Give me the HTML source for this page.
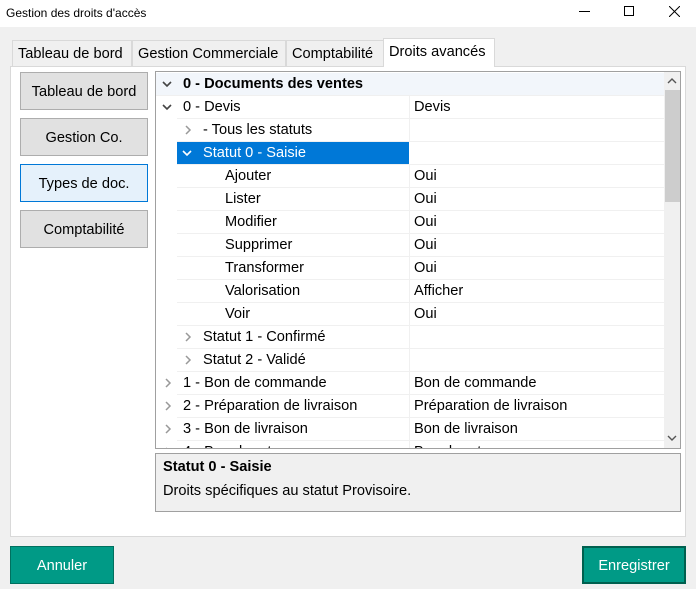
<!DOCTYPE html>
<html><head><meta charset="utf-8"><style>
*{margin:0;padding:0;box-sizing:border-box}
body{width:696px;height:589px;background:#f0f0f0;font-family:"Liberation Sans",sans-serif;font-size:14.6px;color:#000;position:relative;overflow:hidden}
.a{position:absolute}
.title{left:0;top:0;width:696px;height:27px;background:#fff;font-size:12px}
.tab{top:40px;height:27px;border:1px solid #d9d9d9;border-bottom:none;background:#f0f0f0;padding:5px 0 0 5px}
.panel{left:10px;top:66px;width:676px;height:471px;background:#fff;border:1px solid #d9d9d9}
.btn{left:20px;width:128px;height:38px;background:#e1e1e1;border:1px solid #adadad;text-align:center;line-height:39px}
.tree{left:155px;top:71px;width:526px;height:378px;border:1px solid #a0a0a0;background:#fff;overflow:hidden}
.row{position:absolute;left:0;width:509px;height:23px;border-bottom:1px solid #f0f0f0;line-height:23px}
.row span{position:absolute}
.sep{position:absolute;left:253px;top:0;width:1px;height:23px;background:#f0f0f0}
.ch{position:absolute;top:6px}
.gb{left:10px;width:104px;height:38px;background:#009a86;border:1px solid #00705f;color:#fff;text-align:center;line-height:38px}
</style></head><body>
<div class="a title"><span class="a" style="left:6px;top:6px">Gestion des droits d'accès</span>
<div class="a" style="left:579px;top:11px;width:11px;height:1px;background:#000"></div>
<div class="a" style="left:624px;top:6px;width:10px;height:10px;border:1px solid #000"></div>
<svg class="a" style="left:669px;top:6px" width="11" height="11"><path d="M0 0L11 11M11 0L0 11" stroke="#000"/></svg>
</div>
<div class="a tab" style="left:12px;width:120px">Tableau de bord</div>
<div class="a tab" style="left:132px;width:154px">Gestion Commerciale</div>
<div class="a tab" style="left:286px;width:98px">Comptabilité</div>
<div class="a panel"></div>
<div class="a tab" style="left:383px;top:38px;height:29px;width:112px;background:#fff">Droits avancés</div>
<div class="a btn" style="top:72px">Tableau de bord</div>
<div class="a btn" style="top:118px">Gestion Co.</div>
<div class="a btn" style="top:164px;background:#e5f1fb;border-color:#0078d7">Types de doc.</div>
<div class="a btn" style="top:210px">Comptabilité</div>
<div class="a tree">
<div class="row" style="top:1px;background:#f2f6fb;font-weight:bold"><svg class="ch" style="left:6px" width="10" height="10"><path d="M1 3L5 7L9 3" stroke="#444" stroke-width="1.6" fill="none"/></svg><span style="left:27px">0 - Documents des ventes</span></div>
<div class="row" style="top:24px;left:21px;width:488px"><svg class="ch" style="left:-15px" width="10" height="10"><path d="M1 3L5 7L9 3" stroke="#444" stroke-width="1.6" fill="none"/></svg><span style="left:6px">0 - Devis</span><div class="sep" style="left:232px"></div><span style="left:237px">Devis</span></div>
<div class="row" style="top:47px;left:21px;width:488px"><svg class="ch" style="left:6px" width="10" height="10"><path d="M3 1L7 5L3 9" stroke="#999" stroke-width="1.5" fill="none"/></svg><span style="left:26px">- Tous les statuts</span><div class="sep" style="left:232px"></div></div>
<div class="row" style="top:70px;left:21px;width:488px"><div style="position:absolute;left:0;top:0;width:232px;height:22px;background:#0078d7"></div><svg class="ch" style="left:5px" width="10" height="10"><path d="M1 3L5 7L9 3" stroke="#fff" stroke-width="1.6" fill="none"/></svg><span style="left:26px;color:#fff">Statut 0 - Saisie</span></div>
<div class="row" style="top:93px;left:21px;width:488px"><span style="left:48px">Ajouter</span><div class="sep" style="left:232px"></div><span style="left:237px">Oui</span></div>
<div class="row" style="top:116px;left:21px;width:488px"><span style="left:48px">Lister</span><div class="sep" style="left:232px"></div><span style="left:237px">Oui</span></div>
<div class="row" style="top:139px;left:21px;width:488px"><span style="left:48px">Modifier</span><div class="sep" style="left:232px"></div><span style="left:237px">Oui</span></div>
<div class="row" style="top:162px;left:21px;width:488px"><span style="left:48px">Supprimer</span><div class="sep" style="left:232px"></div><span style="left:237px">Oui</span></div>
<div class="row" style="top:185px;left:21px;width:488px"><span style="left:48px">Transformer</span><div class="sep" style="left:232px"></div><span style="left:237px">Oui</span></div>
<div class="row" style="top:208px;left:21px;width:488px"><span style="left:48px">Valorisation</span><div class="sep" style="left:232px"></div><span style="left:237px">Afficher</span></div>
<div class="row" style="top:231px;left:21px;width:488px"><span style="left:48px">Voir</span><div class="sep" style="left:232px"></div><span style="left:237px">Oui</span></div>
<div class="row" style="top:254px;left:21px;width:488px"><svg class="ch" style="left:6px" width="10" height="10"><path d="M3 1L7 5L3 9" stroke="#999" stroke-width="1.5" fill="none"/></svg><span style="left:26px">Statut 1 - Confirmé</span><div class="sep" style="left:232px"></div></div>
<div class="row" style="top:277px;left:21px;width:488px"><svg class="ch" style="left:6px" width="10" height="10"><path d="M3 1L7 5L3 9" stroke="#999" stroke-width="1.5" fill="none"/></svg><span style="left:26px">Statut 2 - Validé</span><div class="sep" style="left:232px"></div></div>
<div class="row" style="top:300px;left:21px;width:488px"><svg class="ch" style="left:-14px" width="10" height="10"><path d="M3 1L7 5L3 9" stroke="#999" stroke-width="1.5" fill="none"/></svg><span style="left:6px">1 - Bon de commande</span><div class="sep" style="left:232px"></div><span style="left:237px">Bon de commande</span></div>
<div class="row" style="top:323px;left:21px;width:488px"><svg class="ch" style="left:-14px" width="10" height="10"><path d="M3 1L7 5L3 9" stroke="#999" stroke-width="1.5" fill="none"/></svg><span style="left:6px">2 - Préparation de livraison</span><div class="sep" style="left:232px"></div><span style="left:237px">Préparation de livraison</span></div>
<div class="row" style="top:346px;left:21px;width:488px"><svg class="ch" style="left:-14px" width="10" height="10"><path d="M3 1L7 5L3 9" stroke="#999" stroke-width="1.5" fill="none"/></svg><span style="left:6px">3 - Bon de livraison</span><div class="sep" style="left:232px"></div><span style="left:237px">Bon de livraison</span></div>
<div class="row" style="top:369px;left:21px;width:488px"><svg class="ch" style="left:-14px" width="10" height="10"><path d="M3 1L7 5L3 9" stroke="#999" stroke-width="1.5" fill="none"/></svg><span style="left:6px">4 - Bon de retour</span><div class="sep" style="left:232px"></div><span style="left:237px">Bon de retour</span></div>
<div class="a" style="left:508px;top:0;width:17px;height:376px;background:#f0f0f0"></div>
<div class="a" style="left:509px;top:18px;width:15px;height:112px;background:#cdcdcd"></div>
<svg class="a" style="left:511px;top:5px" width="10" height="8"><path d="M1 6L5 2L9 6" stroke="#555" stroke-width="1.4" fill="none"/></svg>
<svg class="a" style="left:511px;top:362px" width="10" height="8"><path d="M1 2L5 6L9 2" stroke="#555" stroke-width="1.4" fill="none"/></svg>
</div>
<div class="a" style="left:155px;top:453px;width:526px;height:59px;border:1px solid #a0a0a0;background:#f0f0f0">
<div class="a" style="left:7px;top:5px;font-weight:bold">Statut 0 - Saisie</div>
<div class="a" style="left:7px;top:29px">Droits spécifiques au statut Provisoire.</div>
</div>
<div class="a gb" style="top:546px">Annuler</div>
<div class="a gb" style="left:582px;top:546px;border:2px solid #00604f;line-height:36px">Enregistrer</div>
</body></html>
